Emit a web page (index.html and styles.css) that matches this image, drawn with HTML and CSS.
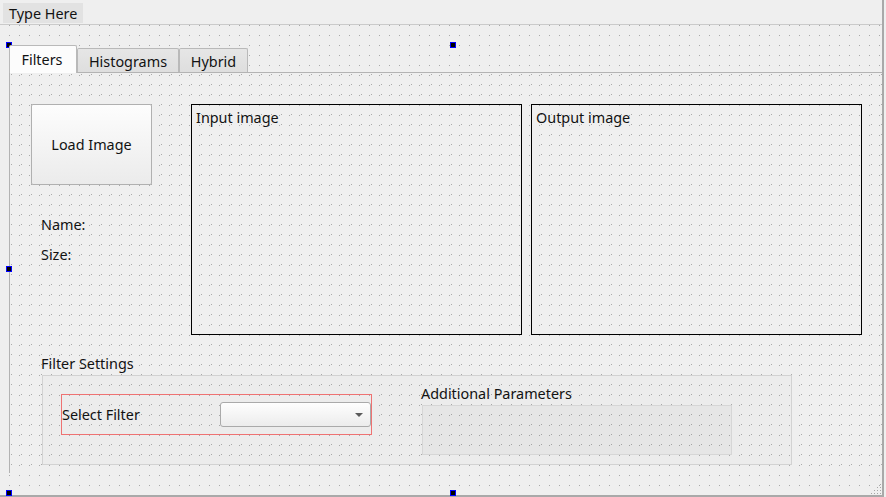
FILE: index.html
```html
<!DOCTYPE html>
<html>
<head>
<meta charset="utf-8">
<link rel="stylesheet" href="styles.css">
</head>
<body>
<div class="window">
  <div class="menubar"><span class="menu-item">Type Here</span></div>
  <div class="central">
    <div class="tabwidget">
      <div class="tabbar">
        <div class="tab tab-active">Filters</div>
        <div class="tab tab-hist">Histograms</div>
        <div class="tab tab-hybrid">Hybrid</div>
      </div>
      <div class="pane">
        <div class="top-row">
          <div class="left-col">
            <button class="btn">Load Image</button>
            <div class="info name">Name:</div>
            <div class="info size">Size:</div>
          </div>
          <div class="frame frame-input"><span class="frame-label">Input image</span></div>
          <div class="frame frame-output"><span class="frame-label">Output image</span></div>
        </div>
        <div class="section-label">Filter Settings</div>
        <div class="groupbox">
          <div class="layout-box">
            <span class="select-label">Select Filter</span>
            <div class="combo"><span class="combo-arrow"></span></div>
          </div>
          <div class="params">
            <div class="params-label">Additional Parameters</div>
            <div class="params-frame"></div>
          </div>
        </div>
      </div>
    </div>
  </div>
  <span class="handle h-tl"></span>
  <span class="handle h-tm"></span>
  <span class="handle h-ml"></span>
  <span class="handle h-bl"></span>
  <span class="handle h-bm"></span>
  <svg class="grip" width="12" height="12" viewBox="0 0 12 12">
    <g fill="#a6a6a6">
      <rect x="10" y="0" width="1" height="1"/>
      <rect x="7" y="3" width="1" height="1"/><rect x="10" y="3" width="1" height="1"/>
      <rect x="4" y="6" width="1" height="1"/><rect x="7" y="6" width="1" height="1"/><rect x="10" y="6" width="1" height="1"/>
      <rect x="1" y="9" width="1" height="1"/><rect x="4" y="9" width="1" height="1"/><rect x="7" y="9" width="1" height="1"/><rect x="10" y="9" width="1" height="1"/>
    </g>
  </svg>
</div>
</body>
</html>
```

FILE: styles.css
```css
* { box-sizing: border-box; }
html, body { margin: 0; padding: 0; }
body {
  background: #efefef;
  font-family: "Noto Sans", "DejaVu Sans", sans-serif;
  font-size: 14.4px;
  color: #121212;
  overflow: hidden;
}
.window {
  position: relative;
  width: 884px;
  height: 497px;
  background: #efefef;
  border-right: 2px solid #a9a9a9;
  border-bottom: 2px solid #a9a9a9;
}
.menubar {
  height: 25px;
  border-bottom: 1px solid #cacaca;
  padding: 3px 0 0 3px;
}
.menu-item {
  display: inline-block;
  height: 20px;
  line-height: 21px;
  padding: 0 0 0 6px;
  width: 80px;
  background: #e2e2e2;
  white-space: nowrap;
  overflow: hidden;
}
.central {
  height: 470px;
  padding: 20px 0 0 9px;
  background-image: url("data:image/svg+xml,%3Csvg xmlns='http://www.w3.org/2000/svg' width='10' height='10'%3E%3Crect width='1' height='1' fill='%23aaaaaa'/%3E%3C/svg%3E");
  background-position: 9px 0;
}
.tabwidget { width: 873px; }
.tabbar {
  display: flex;
  align-items: flex-end;
  height: 27px;
}
.tab {
  height: 24px;
  line-height: 23px;
  padding-top: 1px;
  text-align: center;
  border: 1px solid #b9b9b9;
  border-bottom: none;
  border-radius: 2px 2px 0 0;
  background: linear-gradient(#e6e6e6, #dedede);
  white-space: nowrap;
}
.tab-active {
  position: relative;
  z-index: 1;
  width: 68px;
  height: 28px;
  line-height: 26px;
  padding-top: 1px;
  margin-bottom: -1px;
  background: #fcfcfc;
  padding-right: 2px;
}
.tab-hist { width: 102px; }
.tab-hybrid { width: 69px; }
.pane {
  height: 401px;
  border-top: 1px solid #b3b3b3;
  border-left: 1px solid #b3b3b3;
  padding: 31px 0 0 21px;
  background-image: url("data:image/svg+xml,%3Csvg xmlns='http://www.w3.org/2000/svg' width='10' height='10'%3E%3Crect width='1' height='1' fill='%23aaaaaa'/%3E%3C/svg%3E");
  background-position: 1px 1px;
}
.top-row {
  display: flex;
  height: 231px;
}
.left-col {
  width: 121px;
  display: flex;
  flex-direction: column;
}
.btn {
  width: 121px;
  height: 81px;
  border: 1px solid #b0b0b0;
  border-radius: 2px;
  background: linear-gradient(#fdfdfd, #ebebeb);
  font: inherit;
  color: inherit;
  padding: 0;
}
.info {
  height: 20px;
  line-height: 20px;
  padding-left: 10px;
}
.name { margin-top: 30px; }
.size { margin-top: 10px; }
.frame {
  width: 331px;
  height: 231px;
  border: 1px solid #000;
  padding: 4px 4px;
}
.frame-input { margin-left: 39px; }
.frame-output { margin-left: 9px; }
.frame-label {
  display: block;
  line-height: 18px;
}
.section-label {
  margin: 19px 0 0 10px;
  height: 18px;
  line-height: 20px;
}
.groupbox {
  margin: 3px 0 0 11px;
  width: 750px;
  height: 90px;
  border: 1px solid #d2d2d2;
  background: rgba(0, 0, 0, 0.012);
  padding: 8px 0 0 18px;
  display: flex;
  align-items: flex-start;
}
.layout-box {
  margin-top: 10px;
  width: 311px;
  height: 41px;
  border: 1px solid #ee7272;
  display: flex;
  align-items: center;
  justify-content: space-between;
}
.select-label {
  line-height: 18px;
}
.combo {
  width: 151px;
  height: 25px;
  border: 1px solid #aaaaaa;
  border-radius: 3px;
  background: linear-gradient(#fefefe, #ececec);
  display: flex;
  justify-content: flex-end;
  align-items: center;
  padding-right: 7px;
}
.combo-arrow {
  width: 0;
  height: 0;
  border-left: 4px solid transparent;
  border-right: 4px solid transparent;
  border-top: 4px solid #5a5a5a;
}
.params {
  margin-left: 49px;
}
.params-label {
  height: 18px;
  line-height: 20px;
}
.params-frame {
  margin: 3px 0 0 1px;
  width: 310px;
  height: 50px;
  border: 1px solid #d6d6d6;
  background: rgba(0, 0, 0, 0.025);
}
.handle {
  position: absolute;
  width: 6px;
  height: 6px;
  background: #000;
  border: 1px solid #0000ff;
}
.h-tl { left: 6px; top: 42px; }
.h-tm { left: 450px; top: 42px; }
.h-ml { left: 6px; top: 266px; }
.h-bl { left: 6px; top: 490px; }
.h-bm { left: 450px; top: 490px; }
.grip {
  position: absolute;
  left: 870px;
  top: 484px;
}
```
